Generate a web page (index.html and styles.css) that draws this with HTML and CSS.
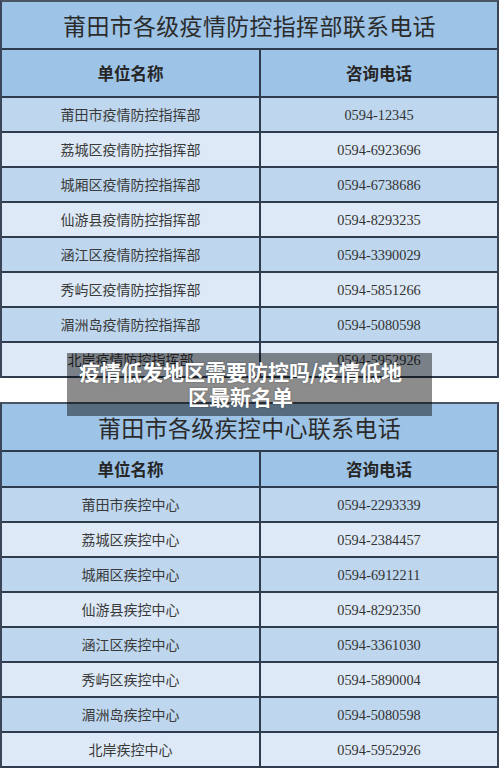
FILE: index.html
```html
<!DOCTYPE html>
<html lang="zh-CN">
<head>
<meta charset="utf-8">
<title>疫情低发地区需要防控吗/疫情低地区最新名单</title>
<link rel="stylesheet" href="styles.css">
</head>
<body>
<main class="page">
  <section class="sheet sheet-first">
    <div class="title">莆田市各级疫情防控指挥部联系电话</div>
    <div class="row head head-tall"><div class="cell">单位名称</div><div class="cell">咨询电话</div></div>
    <div class="row odd"><div class="cell">莆田市疫情防控指挥部</div><div class="cell num">0594-12345</div></div>
    <div class="row even"><div class="cell">荔城区疫情防控指挥部</div><div class="cell num">0594-6923696</div></div>
    <div class="row odd"><div class="cell">城厢区疫情防控指挥部</div><div class="cell num">0594-6738686</div></div>
    <div class="row even"><div class="cell">仙游县疫情防控指挥部</div><div class="cell num">0594-8293235</div></div>
    <div class="row odd"><div class="cell">涵江区疫情防控指挥部</div><div class="cell num">0594-3390029</div></div>
    <div class="row even"><div class="cell">秀屿区疫情防控指挥部</div><div class="cell num">0594-5851266</div></div>
    <div class="row odd"><div class="cell">湄洲岛疫情防控指挥部</div><div class="cell num">0594-5080598</div></div>
    <div class="row even"><div class="cell">北岸疫情防控指挥部</div><div class="cell num">0594-5952926</div></div>
  </section>

  <section class="sheet sheet-second">
    <div class="title">莆田市各级疾控中心联系电话</div>
    <div class="row head head-short"><div class="cell">单位名称</div><div class="cell">咨询电话</div></div>
    <div class="row odd"><div class="cell">莆田市疾控中心</div><div class="cell num">0594-2293339</div></div>
    <div class="row even"><div class="cell">荔城区疾控中心</div><div class="cell num">0594-2384457</div></div>
    <div class="row odd"><div class="cell">城厢区疾控中心</div><div class="cell num">0594-6912211</div></div>
    <div class="row even"><div class="cell">仙游县疾控中心</div><div class="cell num">0594-8292350</div></div>
    <div class="row odd"><div class="cell">涵江区疾控中心</div><div class="cell num">0594-3361030</div></div>
    <div class="row even"><div class="cell">秀屿区疾控中心</div><div class="cell num">0594-5890004</div></div>
    <div class="row odd"><div class="cell">湄洲岛疾控中心</div><div class="cell num">0594-5080598</div></div>
    <div class="row even"><div class="cell">北岸疾控中心</div><div class="cell num">0594-5952926</div></div>
  </section>

  <div class="caption">疫情低发地区需要防控吗/疫情低地区最新名单</div>
</main>
</body>
</html>
```

FILE: styles.css
```css
* { box-sizing: border-box; }

html, body {
  margin: 0;
  padding: 0;
  background: #ffffff;
}

.page {
  position: relative;
  width: 500px;
  height: 769px;
  overflow: hidden;
  font-family: "Noto Sans CJK SC", "Noto Sans", sans-serif;
  color: #333333;
}

.sheet {
  width: 499px;
  border-top: 2px solid #4a5566;
  border-left: 2px solid #3a4658;
  border-right: 2px solid #3a4658;
}

.sheet-second {
  margin-top: 24px;
}

.title {
  display: flex;
  align-items: center;
  justify-content: center;
  height: 48px;
  border-bottom: 2px solid #2f3c4e;
  background: #9dc3e6;
  font-size: 23px;
  font-weight: 400;
  color: #2b2b2b;
  letter-spacing: 0.3px;
}

.row {
  display: grid;
  grid-template-columns: 257px 1fr;
  height: 35px;
  border-bottom: 2px solid #2f3c4e;
}

.cell {
  display: flex;
  align-items: center;
  justify-content: center;
  padding-bottom: 1px;
  font-size: 14px;
  color: #3a3a3a;
}

.cell + .cell {
  border-left: 2px solid #2f3c4e;
}

.num {
  padding: 2px 0 0;
  font-family: "Liberation Serif", "DejaVu Serif", serif;
  font-size: 14.3px;
  color: #333333;
}

.head {
  background: #9dc3e6;
}

.head .cell {
  padding: 0;
  font-size: 16.5px;
  font-weight: 700;
  color: #262626;
}

.head-tall { height: 48px; }
.head-short { height: 36px; }

.odd { background: #bed7ee; }
.even { background: #dde9f6; }

.caption {
  position: absolute;
  left: 67px;
  top: 353px;
  width: 365px;
  height: 63px;
  padding: 6px 26px 0 8px;
  background: rgba(0, 0, 0, 0.45);
  color: #ffffff;
  font-size: 21px;
  font-weight: 700;
  line-height: 24.5px;
  text-align: center;
  text-shadow: 0 0 2px rgba(0, 0, 0, 0.35);
}
```
